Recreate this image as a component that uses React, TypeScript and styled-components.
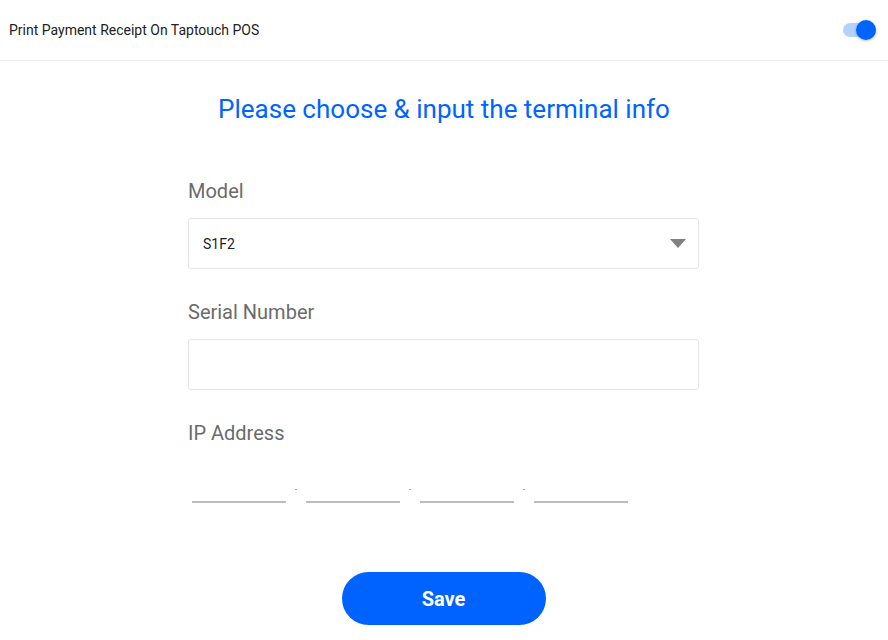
import React from "react";
import styled, { createGlobalStyle } from "styled-components";

const Global = createGlobalStyle`
  html, body { margin: 0; padding: 0; background: #fff; }
  body { font-family: Roboto, "Noto Sans", sans-serif; }
  * { box-sizing: border-box; }
`;

const Page = styled.div`
  width: 888px;
  height: 640px;
  background: #fff;
  display: flex;
  flex-direction: column;
`;

const Header = styled.div`
  height: 61px;
  border-bottom: 1px solid #ebebeb;
  display: flex;
  align-items: center;
  justify-content: space-between;
  padding: 0 12px 0 9px;
`;

const HeaderTitle = styled.span`
  font-size: 14px;
  color: #222;
`;

const Toggle = styled.div`
  position: relative;
  width: 33px;
  height: 14px;
  border-radius: 7px;
  background: #b7d1ff;
`;

const Knob = styled.div`
  position: absolute;
  right: 0;
  top: -3px;
  width: 20px;
  height: 20px;
  border-radius: 50%;
  background: #0064ff;
  box-shadow: 0 1px 3px rgba(0, 0, 0, 0.25);
`;

const Title = styled.h1`
  margin: 33px 0 0;
  text-align: center;
  font-size: 26px;
  font-weight: 400;
  color: #0064ff;
  line-height: 30px;
`;

const Form = styled.div`
  width: 511px;
  margin: 55px auto 0 188px;
  display: flex;
  flex-direction: column;
`;

const Label = styled.div`
  font-size: 20px;
  color: #6b6b6b;
  line-height: 24px;
  margin-bottom: 15px;
`;

const Field = styled.div`
  height: 51px;
  border: 1px solid #e2e6ea;
  border-radius: 3px;
  display: flex;
  align-items: center;
  justify-content: space-between;
  padding: 0 12px 0 14px;
  font-size: 14px;
  color: #222;
  margin-bottom: 31px;
`;

const Arrow = styled.div`
  width: 0;
  height: 0;
  border-left: 8.5px solid transparent;
  border-right: 8.5px solid transparent;
  border-top: 9px solid #808080;
`;

const IpRow = styled.div`
  display: flex;
  align-items: flex-end;
  margin-top: 29px;
  padding-left: 4px;
`;

const IpSeg = styled.div`
  width: 94px;
  height: 2px;
  background: #bdbdbd;
`;

const IpDot = styled.div`
  width: 20px;
  height: 14px;
  display: flex;
  justify-content: center;
  &::before {
    content: "";
    width: 2px;
    height: 1px;
    background: #aaa;
  }
`;

const SaveButton = styled.button`
  align-self: center;
  margin: 69px 0 0;
  width: 204px;
  height: 53px;
  border: none;
  border-radius: 27px;
  background: #0062ff;
  color: #fff;
  font-family: Roboto, sans-serif;
  font-size: 20px;
  font-weight: 700;
  cursor: pointer;
`;

export default function App() {
  return (
    <>
      <Global />
      <Page>
        <Header>
          <HeaderTitle>Print Payment Receipt On Taptouch POS</HeaderTitle>
          <Toggle>
            <Knob />
          </Toggle>
        </Header>
        <Title>Please choose &amp; input the terminal info</Title>
        <Form>
          <Label>Model</Label>
          <Field>
            <span>S1F2</span>
            <Arrow />
          </Field>
          <Label>Serial Number</Label>
          <Field />
          <Label>IP Address</Label>
          <IpRow>
            <IpSeg />
            <IpDot />
            <IpSeg />
            <IpDot />
            <IpSeg />
            <IpDot />
            <IpSeg />
          </IpRow>
          <SaveButton>Save</SaveButton>
        </Form>
      </Page>
    </>
  );
}
